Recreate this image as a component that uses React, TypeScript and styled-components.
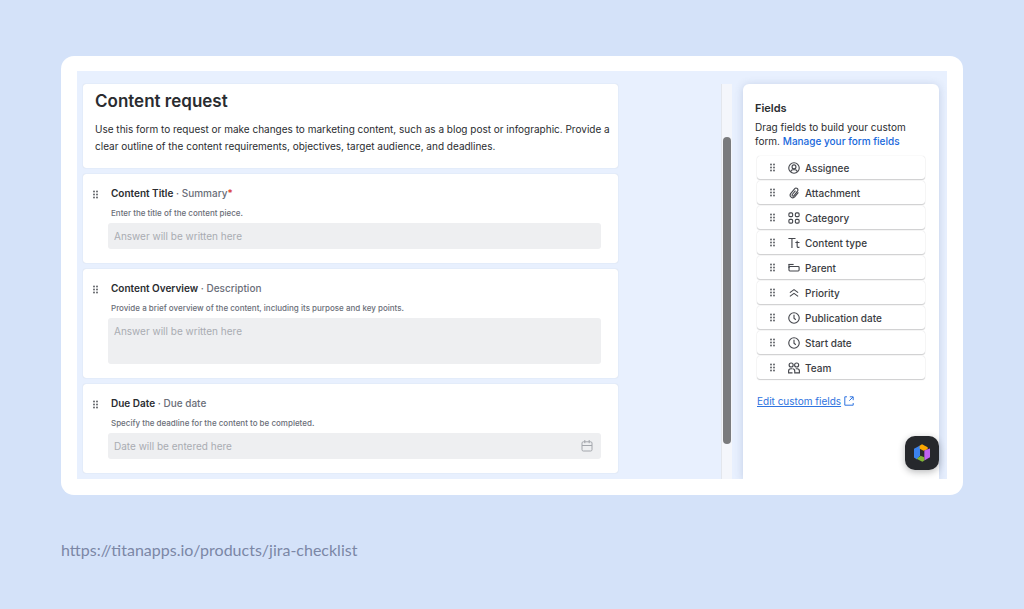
import React from "react";
import styled, { createGlobalStyle } from "styled-components";

const GlobalStyle = createGlobalStyle`
  *, *::before, *::after { box-sizing: border-box; }
  body {
    margin: 0;
    background: #d4e2f9;
    color: #2a2c30;
    font-family: Inter, "Liberation Sans", sans-serif;
    font-size: 10px;
  }
  h1, h2, p, ul { margin: 0; padding: 0; }
  button, input, textarea { font: inherit; }
`;

const Page = styled.main`
  display: flex;
  flex-direction: column;
  gap: 45px;
  padding: 56px 61px 40px;
`;

const Frame = styled.section`
  padding: 15px 16px 16px;
  border-radius: 13px;
  background: #fff;
`;

const Workspace = styled.div`
  display: flex;
  padding: 13px 8px 0 6px;
  background: #e8f0fe;
  overflow: hidden;
`;

const FormArea = styled.div`
  flex: 1;
  min-width: 0;
  padding-bottom: 6px;
`;

const FormColumn = styled.form`
  display: flex;
  flex-direction: column;
  gap: 6px;
  max-width: 535px;
`;

const Card = styled.section`
  border-radius: 3px;
  background: #fff;
  box-shadow: 0 0 1px rgba(60, 80, 110, 0.25);
`;

const IntroCard = styled(Card)`
  padding: 7px 6px 13px 12px;
`;

const FormTitle = styled.h1`
  margin-bottom: 10px;
  font-size: 17px;
  line-height: 20px;
  font-weight: 600;
`;

const Intro = styled.p`
  line-height: 17px;
`;

const QuestionCard = styled(Card)`
  display: flex;
  padding: 12px 17px 14px 9px;
`;

const GripSlot = styled.span`
  display: flex;
  flex: none;
  width: 16px;
  padding-top: 4px;
`;

const QuestionBody = styled.div`
  display: flex;
  flex: 1;
  min-width: 0;
  flex-direction: column;
`;

const QuestionLabel = styled.label`
  padding: 0 3px;
  color: #6a6e78;
  font-weight: 500;
  line-height: 14px;
`;

const QuestionName = styled.span`
  color: #2a2c30;
  font-weight: 600;
`;

const Required = styled.span`
  color: #d8342a;
`;

const Hint = styled.p`
  margin: 7px 3px 4px;
  color: #6a6e78;
  font-size: 8px;
  font-weight: 500;
  line-height: 12px;
`;

const AnswerBox = styled.div`
  display: flex;
  align-items: center;
  padding-right: 8px;
  border-radius: 3px;
  background: #eeeff1;
  color: #a3a6ac;
`;

const AnswerInput = styled.input`
  flex: 1;
  min-width: 0;
  height: 26px;
  padding: 0 6px;
  border: 0;
  background: transparent;
  color: #2a2c30;
  &::placeholder { color: #a9acb1; opacity: 1; }
`;

const AnswerArea = styled.textarea`
  flex: 1;
  min-width: 0;
  height: 46px;
  padding: 7px 6px;
  border: 0;
  background: transparent;
  color: #2a2c30;
  line-height: 13px;
  resize: none;
  &::placeholder { color: #a9acb1; opacity: 1; }
`;

const ScrollTrack = styled.div`
  display: flex;
  width: 11px;
  margin-right: 11px;
  padding: 53px 1px 35px 1px;
  border-left: 1px solid #e3e6ec;
  background: #f4f6fb;
`;

const ScrollThumb = styled.div`
  flex: 1;
  border-radius: 5px;
  background: #7a7b7d;
`;

const FieldsPanel = styled.aside`
  position: relative;
  width: 196px;
  padding: 16px 14px 0;
  border-radius: 6px 6px 0 0;
  background: #fff;
  box-shadow: 0 1px 8px rgba(70, 95, 150, 0.24);
`;

const PanelIntro = styled.div`
  margin: 0 -2px 8px;
`;

const PanelTitle = styled.h2`
  margin-bottom: 4px;
  font-size: 11px;
  line-height: 16px;
  font-weight: 600;
`;

const PanelText = styled.p`
  line-height: 14px;
`;

const ManageLink = styled.a`
  color: #1868db;
  font-weight: 500;
  text-decoration: none;
`;

const FieldList = styled.ul`
  display: flex;
  flex-direction: column;
  gap: 2px;
  list-style: none;
`;

const FieldButton = styled.button`
  display: flex;
  align-items: center;
  width: 100%;
  height: 23px;
  padding: 0 12px;
  border: 0;
  border-radius: 3px;
  background: #fff;
  color: #3a3c42;
  font-weight: 500;
  text-align: left;
  box-shadow: 0 1px 1px rgba(30, 31, 33, 0.2), 0 0 1px rgba(30, 31, 33, 0.2);
  cursor: grab;
`;

const FieldIcon = styled.svg`
  flex: none;
  width: 12px;
  height: 12px;
  margin: 0 5px 0 12px;
  fill: none;
  stroke: #45474d;
  stroke-width: 1.5;
`;

const EditLink = styled.a`
  display: flex;
  align-items: center;
  gap: 3px;
  margin-top: 15px;
  color: #2f74e0;
  line-height: 14px;
  text-decoration: none;
`;

const Underlined = styled.span`
  text-decoration: underline;
`;

const AssistantButton = styled.button`
  position: absolute;
  right: 0;
  bottom: 9px;
  display: flex;
  align-items: center;
  justify-content: center;
  width: 34px;
  height: 34px;
  padding: 0;
  border: 0;
  border-radius: 10px;
  background: #26282c;
  box-shadow: 0 2px 7px rgba(20, 22, 26, 0.3);
`;

const SourceLink = styled.a`
  align-self: flex-start;
  color: #7b87a6;
  font-family: Lato, sans-serif;
  font-size: 16px;
  line-height: 20px;
  text-decoration: none;
`;

function Grip() {
  return (
    <svg width="7" height="9" viewBox="0 0 7 9" fill="#54565c" aria-hidden="true">
      {[1.5, 4.5, 7.5].map((y) =>
        [2, 5].map((x) => <circle key={`${x}-${y}`} cx={x} cy={y} r="0.9" />)
      )}
    </svg>
  );
}

const clock = (
  <>
    <circle cx="8" cy="8" r="7" />
    <path d="M8 3.7v4.6l2.4 2" />
  </>
);

const fields: { name: string; icon: React.ReactNode }[] = [
  {
    name: "Assignee",
    icon: (
      <>
        <circle cx="8" cy="8" r="7" />
        <circle cx="8" cy="6.5" r="2.6" />
        <path d="M3.5 13c.5-2 1.8-2.6 3-2.6h3c1.2 0 2.5.6 3 2.6" />
      </>
    ),
  },
  {
    name: "Attachment",
    icon: (
      <path d="M13.8 7.2l-4.9 6a3.5 3.5 0 0 1-5.4-4.4l5.3-6.400a2.500 2.500 0 0 1 3.900 3.200l-5 6.100a1.300 1.300 0 0 1-2-1.700l4.300-5.200" />
    ),
  },
  {
    name: "Category",
    icon: (
      <>
        <rect x="1.200" y="1.200" width="5" height="5" rx="1.500" />
        <rect x="9.800" y="1.200" width="5" height="5" rx="1.500" />
        <rect x="1.200" y="9.800" width="5" height="5" rx="1.500" />
        <rect x="9.800" y="9.800" width="5" height="5" rx="1.500" />
      </>
    ),
  },
  {
    name: "Content type",
    icon: <path d="M.5 2h9.500M5.250 2v12.500M12.200 5v7.200c0 1.300.6 1.700 1.600 1.700h1.500M9.800 7.300h5.500" />,
  },
  {
    name: "Parent",
    icon: (
      <>
        <path d="M.5 3.300h7" />
        <rect x="1.300" y="6" width="13.500" height="6" rx="1.200" />
        <path d="M1.300 8V3.300" />
      </>
    ),
  },
  { name: "Priority", icon: <path d="M2.500 7.500L8 3.500l5.500 4M2.500 12.500L8 8.500l5.500 4" /> },
  { name: "Publication date", icon: clock },
  { name: "Start date", icon: clock },
  {
    name: "Team",
    icon: (
      <>
        <circle cx="4.200" cy="4" r="2.700" />
        <circle cx="11.500" cy="4" r="2.700" />
        <path d="M6 14.500H.8V12c0-1.900 1.200-3 3-3h1.700" />
        <path d="M10.300 9h1.900c1.800 0 3 1.100 3 3v2.500H9V12c0-1.900-1.200-3-3-3" />
      </>
    ),
  },
];

function CalendarIcon() {
  return (
    <svg width="12" height="12" viewBox="0 0 12 12" fill="none" stroke="currentColor" aria-hidden="true">
      <rect x="1" y="1.800" width="10" height="9.200" rx="1.300" />
      <path d="M1 5.500h10M3.800 0v3.200M8.200 0v3.200" />
    </svg>
  );
}

function ExternalIcon() {
  return (
    <svg width="10" height="10" viewBox="0 0 10 10" fill="none" stroke="currentColor" aria-hidden="true">
      <path d="M3 .8H.8v8.400h8.400V7M5.800.8h3.400v3.400M9 1L5.300 4.700" />
    </svg>
  );
}

function AssistantLogo() {
  return (
    <svg width="16" height="18" viewBox="0 0 48 53" aria-hidden="true">
      <path d="M0 14L18 4v30L9 46l-9-6z" fill="#3b82ee" />
      <path d="M17 5l7-5 17 9v6l-12 5-12-6z" fill="#fca700" />
      <path d="M31 19l17-6v26L31 49V36z" fill="#bf63f3" />
      <path d="M8 44l12-9 11 4v10l-6 4z" fill="#82b536" />
    </svg>
  );
}

interface QuestionProps {
  id: string;
  name: string;
  field: string;
  hint: string;
  placeholder: string;
  kind?: "line" | "area" | "date";
  required?: boolean;
}

function Question({ id, name, field, hint, placeholder, kind = "line", required }: QuestionProps) {
  return (
    <QuestionCard>
      <GripSlot>
        <Grip />
      </GripSlot>
      <QuestionBody>
        <QuestionLabel htmlFor={id}>
          <QuestionName>{name}</QuestionName> · {field}
          {required && <Required>*</Required>}
        </QuestionLabel>
        <Hint id={`${id}-hint`}>{hint}</Hint>
        <AnswerBox>
          {kind === "area" ? (
            <AnswerArea id={id} placeholder={placeholder} aria-describedby={`${id}-hint`} />
          ) : (
            <AnswerInput id={id} type="text" placeholder={placeholder} aria-describedby={`${id}-hint`} />
          )}
          {kind === "date" && <CalendarIcon />}
        </AnswerBox>
      </QuestionBody>
    </QuestionCard>
  );
}

export default function App() {
  return (
    <>
      <GlobalStyle />
      <Page>
        <Frame>
          <Workspace>
            <FormArea>
              <FormColumn>
                <IntroCard>
                  <FormTitle>Content request</FormTitle>
                  <Intro>
                    Use this form to request or make changes to marketing content, such as a blog post or
                    infographic. Provide a clear outline of the content requirements, objectives, target
                    audience, and deadlines.
                  </Intro>
                </IntroCard>
                <Question
                  id="title"
                  name="Content Title"
                  field="Summary"
                  hint="Enter the title of the content piece."
                  placeholder="Answer will be written here"
                  required
                />
                <Question
                  id="overview"
                  name="Content Overview"
                  field="Description"
                  hint="Provide a brief overview of the content, including its purpose and key points."
                  placeholder="Answer will be written here"
                  kind="area"
                />
                <Question
                  id="due"
                  name="Due Date"
                  field="Due date"
                  hint="Specify the deadline for the content to be completed."
                  placeholder="Date will be entered here"
                  kind="date"
                />
              </FormColumn>
            </FormArea>
            <ScrollTrack aria-hidden="true">
              <ScrollThumb />
            </ScrollTrack>
            <FieldsPanel>
              <PanelIntro>
                <PanelTitle>Fields</PanelTitle>
                <PanelText>
                  Drag fields to build your custom form.{" "}
                  <ManageLink href="#manage">Manage your form fields</ManageLink>
                </PanelText>
              </PanelIntro>
              <FieldList>
                {fields.map((field) => (
                  <li key={field.name}>
                    <FieldButton type="button" draggable>
                      <Grip />
                      <FieldIcon viewBox="0 0 16 16" aria-hidden="true">
                        {field.icon}
                      </FieldIcon>
                      {field.name}
                    </FieldButton>
                  </li>
                ))}
              </FieldList>
              <EditLink href="#custom-fields">
                <Underlined>Edit custom fields</Underlined>
                <ExternalIcon />
              </EditLink>
              <AssistantButton type="button" aria-label="Open assistant">
                <AssistantLogo />
              </AssistantButton>
            </FieldsPanel>
          </Workspace>
        </Frame>
        <SourceLink href="https://titanapps.io/products/jira-checklist">
          https://titanapps.io/products/jira-checklist
        </SourceLink>
      </Page>
    </>
  );
}
